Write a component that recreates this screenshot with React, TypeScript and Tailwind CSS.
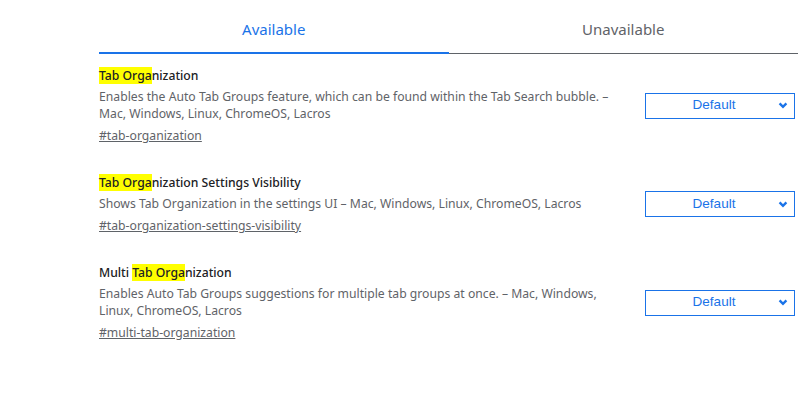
const flags = [
  {
    before: '',
    rest: 'nization',
    desc: 'Enables the Auto Tab Groups feature, which can be found within the Tab Search bubble. – Mac, Windows, Linux, ChromeOS, Lacros',
    link: '#tab-organization',
  },
  {
    before: '',
    rest: 'nization Settings Visibility',
    desc: 'Shows Tab Organization in the settings UI – Mac, Windows, Linux, ChromeOS, Lacros',
    link: '#tab-organization-settings-visibility',
  },
  {
    before: 'Multi ',
    rest: 'nization',
    desc: 'Enables Auto Tab Groups suggestions for multiple tab groups at once. – Mac, Windows, Linux, ChromeOS, Lacros',
    link: '#multi-tab-organization',
  },
];

function Chevron() {
  return (
    <svg width="10" height="7" viewBox="0 0 10 7" className="text-[#1a73e8]">
      <path d="M1.6 1.4 L5 4.8 L8.4 1.4" fill="none" stroke="currentColor" strokeWidth="2.4" />
    </svg>
  );
}

export default function App() {
  return (
    <div className="min-h-screen bg-white font-['Noto_Sans',sans-serif] text-[12.2px]">
      <div className="ml-[99px] w-[699px]">
        <div className="grid grid-cols-2 h-[54px] border-b border-[#5f6368]">
          <div className="relative flex items-center justify-center pt-[6px] text-[15px] text-[#1a73e8]">
            Available
            <div className="absolute left-0 right-0 bottom-[-1px] h-[2px] bg-[#1a73e8]" />
          </div>
          <div className="flex items-center justify-center pt-[6px] text-[15px] text-[#5f6368]">
            Unavailable
          </div>
        </div>

        <div className="flex flex-col gap-[30px] pt-[13px]">
          {flags.map((f) => (
            <div key={f.link} className="flex items-center justify-between">
              <div className="w-[520px] leading-[17px]">
                <div className="font-medium text-[#202124]">
                  {f.before}
                  <span className="bg-[#ffff00]">Tab Orga</span>
                  {f.rest}
                </div>
                <div className="mt-[4px] text-[#5f6368]">{f.desc}</div>
                <div className="mt-[5px] text-[#5f6368] underline">{f.link}</div>
              </div>
              <div className="mr-[3px] flex h-[26px] w-[150px] items-center border border-[#1a73e8] pl-[8px] pr-[6px]">
                <span className="flex-1 pr-[4px] text-center font-['Liberation_Sans',sans-serif] text-[13.5px] text-[#1a73e8]">
                  Default
                </span>
                <Chevron />
              </div>
            </div>
          ))}
        </div>
      </div>
    </div>
  );
}
